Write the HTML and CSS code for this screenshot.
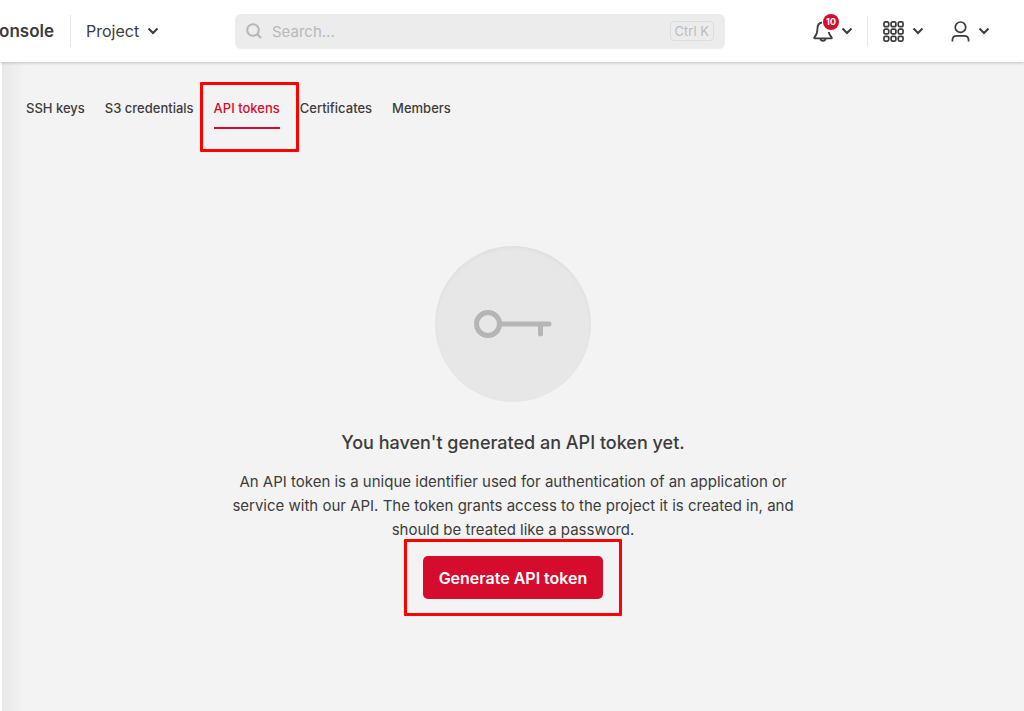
FILE: index.html
```html
<!DOCTYPE html>
<html lang="en">
<head>
    <meta charset="UTF-8">
    <meta name="viewport" content="width=device-width, initial-scale=1.0">
    <title>API tokens</title>
    <link rel="stylesheet" href="styles.css">
</head>
<body>
    <header class="topbar">
        <a href="#" class="brand">onsole</a>
        <button type="button" class="menu-button project">
            <span>Project</span>
            <svg class="chevron" viewBox="0 0 12 8"><path d="M1.500 1.500 6 6l4.500-4.500"/></svg>
        </button>

        <div class="search">
            <svg class="search-icon" viewBox="0 0 16 16"><circle cx="7" cy="7" r="5.800"/><path d="m11.300 11.300 3.700 3.700"/></svg>
            <input type="text" aria-label="Search" placeholder="Search...">
            <kbd>Ctrl K</kbd>
        </div>

        <div class="actions">
            <button type="button" class="menu-button" aria-label="Notifications">
                <span class="bell">
                    <svg viewBox="0 0 20 22"><path d="M9 2.500C5.500 3 4.500 5.500 4.500 8.500 4.500 14 3 15.500 1.400 17.300c-.5.600-.2 1 .4 1h16.400c.7 0 .9-.5.4-1-1.400-1.500-2.400-2.600-2.900-5.300"/><path d="M7.500 18.500c0 3 5 3 5 0"/></svg>
                    <span class="badge">10</span>
                </span>
                <svg class="chevron" viewBox="0 0 12 8"><path d="M1.500 1.500 6 6l4.500-4.500"/></svg>
            </button>
            <button type="button" class="menu-button apps" aria-label="Products">
                <svg class="grid-icon" viewBox="0 0 22 22">
                    <rect x="1" y="1" width="5" height="5" rx="1.500"/><rect x="8.500" y="1" width="5" height="5" rx="1.500"/><rect x="16" y="1" width="5" height="5" rx="1.500"/>
                    <rect x="1" y="8.500" width="5" height="5" rx="1.500"/><rect x="8.500" y="8.500" width="5" height="5" rx="1.500"/><rect x="16" y="8.500" width="5" height="5" rx="1.500"/>
                    <rect x="1" y="16" width="5" height="5" rx="1.500"/><rect x="8.500" y="16" width="5" height="5" rx="1.500"/><rect x="16" y="16" width="5" height="5" rx="1.500"/>
                </svg>
                <svg class="chevron" viewBox="0 0 12 8"><path d="M1.500 1.500 6 6l4.500-4.500"/></svg>
            </button>
            <button type="button" class="menu-button" aria-label="Account">
                <svg class="user-icon" viewBox="0 0 20 22"><circle cx="10" cy="6.500" r="5.500"/><path d="M1.500 21.500v-1.500c0-3 2-4.500 4.500-4.500h8c2.500 0 4.500 1.500 4.500 4.500v1.500"/></svg>
                <svg class="chevron" viewBox="0 0 12 8"><path d="M1.500 1.500 6 6l4.500-4.500"/></svg>
            </button>
        </div>
    </header>

    <main class="content">
        <nav class="tabs">
            <a href="#">SSH keys</a>
            <a href="#">S3 credentials</a>
            <a href="#" class="active">API tokens</a>
            <a href="#">Certificates</a>
            <a href="#">Members</a>
        </nav>

        <section class="empty-state">
            <div class="empty-icon">
                <svg viewBox="0 0 78 30"><circle cx="14" cy="15" r="11.500"/><path d="M27 15h48M66.500 16v9"/></svg>
            </div>
            <h1>You haven't generated an API token yet.</h1>
            <p>An API token is a unique identifier used for authentication of an application or service with our API. The token grants access to the project it is created in, and should be treated like a password.</p>
            <div class="highlight">
                <button type="button" class="primary">Generate API token</button>
            </div>
        </section>
    </main>
</body>
</html>
```
FILE: styles.css
```css
* {
    box-sizing: border-box;
}

body {
    margin: 0;
    min-height: 100vh;
    display: flex;
    flex-direction: column;
    font-family: Inter, "Liberation Sans", sans-serif;
    color: #3c3c3c;
    background-color: #fff;
}

a {
    color: inherit;
    text-decoration: none;
}

svg {
    display: block;
    fill: none;
    stroke: #3c3c3c;
    stroke-width: 2;
}

.topbar {
    position: relative;
    display: flex;
    align-items: center;
    height: 62px;
    padding-right: 34px;
    background-color: #fff;
    box-shadow: 0 1px 3px rgba(0, 0, 0, 0.2);
}

.brand {
    width: 71px;
    height: 32px;
    padding-right: 16px;
    border-right: 1px solid #e6e6e6;
    display: flex;
    align-items: center;
    justify-content: flex-end;
    font-size: 17px;
    font-weight: 600;
}

.menu-button {
    display: flex;
    align-items: center;
    gap: 8px;
    padding: 0;
    border: none;
    background: none;
    font-family: inherit;
    font-size: 16px;
    color: inherit;
    cursor: pointer;
}

.project {
    width: 164px;
    padding-left: 15px;
}

.chevron {
    width: 12px;
    height: 8px;
}

.search {
    flex: 1;
    max-width: 490px;
    height: 35px;
    padding: 0 11px;
    display: flex;
    align-items: center;
    gap: 10px;
    background-color: #ececec;
    border-radius: 6px;
}

.search-icon {
    width: 16px;
    height: 16px;
    stroke: #b5b5b5;
}

.search input {
    flex: 1;
    min-width: 0;
    padding: 0;
    border: none;
    outline: none;
    background: none;
    font-family: inherit;
    font-size: 15px;
}

.search input::placeholder {
    color: #b9b9b9;
}

.search kbd {
    padding: 0 4px;
    border: 1px solid #dcdcdc;
    border-radius: 4px;
    font-family: inherit;
    font-size: 13px;
    line-height: 18px;
    color: #bbb;
}

.actions {
    margin-left: auto;
    display: flex;
    align-items: center;
}

.actions svg:not(.chevron) {
    stroke-width: 1.8;
}

.actions .menu-button {
    gap: 8px;
}

.bell {
    position: relative;
}

.bell svg {
    width: 20px;
    height: 22px;
}

.badge {
    position: absolute;
    top: -6px;
    left: 10px;
    width: 16px;
    height: 16px;
    border-radius: 50%;
    background-color: #d50c2d;
    color: #fff;
    font-size: 9px;
    font-weight: 700;
    line-height: 16px;
    text-align: center;
}

.apps {
    height: 30px;
    margin: 0 27px 0 14px;
    padding-left: 15px;
    border-left: 1px solid #e6e6e6;
}

.grid-icon {
    width: 21px;
    height: 21px;
}

.user-icon {
    width: 19px;
    height: 21px;
}

.content {
    flex: 1;
    margin-left: 2px;
    padding: 36px 0 40px;
    background: linear-gradient(to right, #e9e9e9, #f3f3f3 24px);
}

.tabs {
    display: flex;
    gap: 20px;
    padding-left: 24px;
    font-size: 13px;
    font-weight: 500;
    line-height: 20px;
}

.tabs a {
    position: relative;
    padding-bottom: 9px;
    border-bottom: 2px solid transparent;
}

.tabs .active {
    color: #d50c2d;
    border-bottom-color: #d50c2d;
}

.tabs .active::after,
.highlight::after {
    content: "";
    position: absolute;
    border: 3px solid #f00;
    border-radius: 1px;
    pointer-events: none;
}

.tabs .active::after {
    inset: -16px -19px -25px -14px;
}

.empty-state {
    display: flex;
    flex-direction: column;
    align-items: center;
    padding-top: 117px;
    text-align: center;
}

.empty-icon {
    width: 156px;
    height: 156px;
    display: flex;
    align-items: center;
    justify-content: center;
    border-radius: 50%;
    background-color: #e7e7e7;
    box-shadow: inset 0 2px 4px rgba(0, 0, 0, 0.04);
}

.empty-icon svg {
    width: 78px;
    height: 30px;
    stroke: #b5b5b5;
    stroke-width: 5;
    stroke-linecap: round;
}

.empty-state h1 {
    margin: 29px 0 15px;
    font-size: 18px;
    font-weight: 500;
    line-height: 24px;
}

.empty-state p {
    max-width: 580px;
    margin: 0 0 14px;
    font-size: 15px;
    line-height: 24px;
}

.highlight {
    position: relative;
}

.highlight::after {
    inset: -17px -19px;
}

.primary {
    width: 180px;
    height: 43px;
    border: none;
    border-radius: 5px;
    background-color: #d50c2d;
    color: #fff;
    font-family: inherit;
    font-size: 16px;
    font-weight: 600;
    white-space: nowrap;
    cursor: pointer;
}

.primary:hover {
    background-color: #b80a27;
}
```
